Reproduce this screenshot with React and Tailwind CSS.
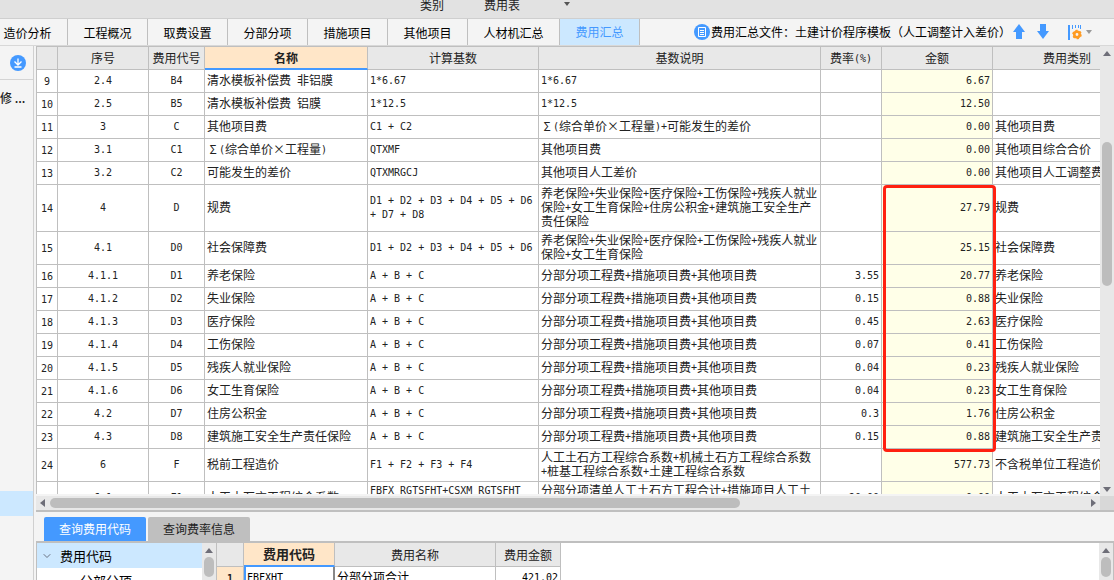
import React, { useState } from 'react';
import { ChevronDown } from 'lucide-react';

const TABS = ['造价分析', '工程概况', '取费设置', '分部分项', '措施项目', '其他项目', '人材机汇总', '费用汇总'];

const ABC = 'A + B + C';
const ABC_DESC = '分部分项工程费+措施项目费+其他项目费';

const ROWS = [
  { no: 9, seq: '2.4', code: 'B4', name: '清水模板补偿费 非铝膜', base: '1*6.67', desc: '1*6.67', rate: '', amount: '6.67', type: '' },
  { no: 10, seq: '2.5', code: 'B5', name: '清水模板补偿费 铝膜', base: '1*12.5', desc: '1*12.5', rate: '', amount: '12.50', type: '' },
  { no: 11, seq: '3', code: 'C', name: '其他项目费', base: 'C1 + C2', desc: 'Σ(综合单价×工程量)+可能发生的差价', rate: '', amount: '0.00', type: '其他项目费' },
  { no: 12, seq: '3.1', code: 'C1', name: 'Σ(综合单价×工程量)', base: 'QTXMF', desc: '其他项目费', rate: '', amount: '0.00', type: '其他项目综合合价' },
  { no: 13, seq: '3.2', code: 'C2', name: '可能发生的差价', base: 'QTXMRGCJ', desc: '其他项目人工差价', rate: '', amount: '0.00', type: '其他项目人工调整费' },
  { no: 14, seq: '4', code: 'D', name: '规费', base: 'D1 + D2 + D3 + D4 + D5 + D6\n+ D7 + D8', desc: '养老保险+失业保险+医疗保险+工伤保险+残疾人就业\n保险+女工生育保险+住房公积金+建筑施工安全生产\n责任保险', rate: '', amount: '27.79', type: '规费' },
  { no: 15, seq: '4.1', code: 'D0', name: '社会保障费', base: 'D1 + D2 + D3 + D4 + D5 + D6', desc: '养老保险+失业保险+医疗保险+工伤保险+残疾人就业\n保险+女工生育保险', rate: '', amount: '25.15', type: '社会保障费' },
  { no: 16, seq: '4.1.1', code: 'D1', name: '养老保险', base: ABC, desc: ABC_DESC, rate: '3.55', amount: '20.77', type: '养老保险' },
  { no: 17, seq: '4.1.2', code: 'D2', name: '失业保险', base: ABC, desc: ABC_DESC, rate: '0.15', amount: '0.88', type: '失业保险' },
  { no: 18, seq: '4.1.3', code: 'D3', name: '医疗保险', base: ABC, desc: ABC_DESC, rate: '0.45', amount: '2.63', type: '医疗保险' },
  { no: 19, seq: '4.1.4', code: 'D4', name: '工伤保险', base: ABC, desc: ABC_DESC, rate: '0.07', amount: '0.41', type: '工伤保险' },
  { no: 20, seq: '4.1.5', code: 'D5', name: '残疾人就业保险', base: ABC, desc: ABC_DESC, rate: '0.04', amount: '0.23', type: '残疾人就业保险' },
  { no: 21, seq: '4.1.6', code: 'D6', name: '女工生育保险', base: ABC, desc: ABC_DESC, rate: '0.04', amount: '0.23', type: '女工生育保险' },
  { no: 22, seq: '4.2', code: 'D7', name: '住房公积金', base: ABC, desc: ABC_DESC, rate: '0.3', amount: '1.76', type: '住房公积金' },
  { no: 23, seq: '4.3', code: 'D8', name: '建筑施工安全生产责任保险', base: ABC, desc: ABC_DESC, rate: '0.15', amount: '0.88', type: '建筑施工安全生产责任保险' },
  { no: 24, seq: '6', code: 'F', name: '税前工程造价', base: 'F1 + F2 + F3 + F4', desc: '人工土石方工程综合系数+机械土石方工程综合系数\n+桩基工程综合系数+土建工程综合系数', rate: '', amount: '577.73', type: '不含税单位工程造价' },
  { no: 25, seq: '6.1', code: 'F1', name: '人工土石方工程综合系数', base: 'FBFX_RGTSFHT+CSXM_RGTSFHT\n+QTXM_RGTSFHT', desc: '分部分项清单人工土石方工程合计+措施项目人工土\n石方工程合计', rate: '20.00', amount: '0.00', type: '人工土石方工程综合系数' },
];

// half-width runs take a 6px advance, symbols take a full 12px cell
const GridText = ({ children }) =>
  String(children).split(/([\x20-\x7e\n]+|[Σ×])/).filter(Boolean).map((part, i) => {
    if (part === 'Σ' || part === '×') {
      return <span key={i} className="inline-block w-3 text-center leading-none">{part}</span>;
    }
    if (/^[\x20-\x7e\n]/.test(part)) {
      return <span key={i} className="align-[1px] font-['DejaVu_Sans_Mono',monospace] text-[10px] leading-[8px]">{part}</span>;
    }
    return part;
  });

const Triangle = ({ dir, className = 'text-[#6e6e78]' }) => {
  const points = { up: '0,5 4,0 8,5', down: '0,0 8,0 4,5', left: '5,0 5,8 0,4', right: '0,0 5,4 0,8' };
  const tall = dir === 'left' || dir === 'right';
  return (
    <svg width={tall ? 5 : 8} height={tall ? 8 : 5} className={`shrink-0 ${className}`} fill="currentColor">
      <polygon points={points[dir]} />
    </svg>
  );
};

const TopBar = () => (
  <div className="flex h-[19px] shrink-0 items-start border-b border-[#cfcfcf] bg-[#e2e2e2] pl-105 leading-[10px] text-[#222]">
    <span className="w-16">类别</span>
    <button className="flex w-38 items-start leading-[10px]">
      <span className="w-20 text-left">费用表</span>
      <svg width="6" height="4" className="mt-[2px]" fill="#555"><polygon points="0,0 6,0 3,4" /></svg>
    </button>
  </div>
);

const FileTools = () => (
  <div className="ml-auto flex shrink-0 items-center pr-[22px] text-black">
    <svg width="16" height="16" viewBox="0 0 16 16">
      <circle cx="8" cy="8" r="8" fill="#4499ff" />
      <path d="M4.5 3.5h7v9h-7z M6 6.5h4 M6 8.5h4 M6 10.5h4" fill="none" stroke="#fff" />
    </svg>
    <span className="w-[303px] whitespace-nowrap pl-px">费用汇总文件：土建计价程序模板（人工调整计入差价）</span>
    <button aria-label="上移" className="mr-3">
      <svg width="12" height="16" fill="#4499ff"><path d="M6 0L12 8H9V15H3V8H0Z" /></svg>
    </button>
    <button aria-label="下移" className="mr-[19px]">
      <svg width="12" height="16" fill="#4499ff"><path d="M6 15L12 7H9V0H3V7H0Z" /></svg>
    </button>
    <button aria-label="设置" className="flex items-center gap-1">
      <svg width="14" height="15" viewBox="0 0 14 15">
        <path d="M0 0h2v15H0z M4 0h1v4H4z M7 0h1v3H7z M10 0h1v3h-1z M12 0h1v4h-1z" fill="#4499ff" />
        <circle cx="9" cy="9.5" r="2.7" fill="none" stroke="#ff9b22" strokeWidth="2.6" />
        <circle cx="9" cy="9.5" r="4" fill="none" stroke="#ff9b22" strokeWidth="1.6" strokeDasharray="2.2 2" />
      </svg>
      <svg width="6" height="4" fill="#999"><polygon points="0,0 6,0 3,4" /></svg>
    </button>
  </div>
);

const TabBar = ({ active, onSelect }) => (
  <div className="flex h-[27px] shrink-0 border-b border-[#d8d8d8] bg-[#f4f4f4]">
    {TABS.map((tab, i) => (
      <button
        key={tab}
        onClick={() => onSelect(tab)}
        className={`shrink-0 border-r border-[#bfbfbf] whitespace-nowrap ${i === 0 ? 'w-17 pr-3' : tab.length === 5 ? 'w-23' : 'w-20'} ${active === tab ? 'bg-[#cce8ff] text-[#4499ff]' : 'pt-px text-black'}`}
      >
        {tab}
      </button>
    ))}
    <FileTools />
  </div>
);

const Sidebar = () => (
  <div className="mr-[2px] flex w-[34px] shrink-0 flex-col border-r border-[#d0d0d0] bg-[#f4f4f4]">
    <div className="flex h-[34px] items-center justify-end border-b border-[#d4d4d4] pr-[7px]">
      <button aria-label="展开">
        <svg width="16" height="16" viewBox="0 0 16 16">
          <circle cx="8" cy="8" r="8" fill="#4499ff" />
          <path d="M8 3.5V10 M4.5 6.5L8 10L11.5 6.5 M4.5 12H11.5" fill="none" stroke="#fff" strokeWidth="1.3" />
        </svg>
      </button>
    </div>
    <div className="pt-2 leading-5 font-medium whitespace-nowrap text-[#222]">修 ...</div>
    <div className="flex-1" />
    <div className="mb-16 h-[25px] bg-[#cce8ff]" />
  </div>
);

const td = 'border-r border-b border-[#bfbfbf] px-[2px] pt-px pb-[3px] whitespace-pre';
const numTd = 'border-r border-b border-[#bfbfbf] p-[2px] text-center';
const th = 'h-[23px] border-r border-b border-[#bfbfbf] bg-[#e8e8e8] p-0 font-normal whitespace-nowrap';

const FeeTable = () => (
  <table className="w-[1105px] table-fixed border-separate border-spacing-0 leading-[14px] text-[#222]">
    <colgroup>
      <col className="w-[21px]" />
      <col className="w-[91px]" />
      <col className="w-[56px]" />
      <col className="w-[163px]" />
      <col className="w-[171px]" />
      <col className="w-[282px]" />
      <col className="w-[61px]" />
      <col className="w-[111px]" />
      <col className="w-[149px]" />
    </colgroup>
    <thead>
      <tr>
        <th className={th}></th>
        <th className={th}>序号</th>
        <th className={th}>费用代号</th>
        <th className="border-r border-b-2 border-r-[#bfbfbf] border-b-[#4499ff] bg-[#ffe6c8] p-0 font-bold">名称</th>
        <th className={th}>计算基数</th>
        <th className={th}>基数说明</th>
        <th className={th}><GridText>费率(%)</GridText></th>
        <th className={th}>金额</th>
        <th className={th}>费用类别</th>
      </tr>
    </thead>
    <tbody>
      {ROWS.map((r) => (
        <tr key={r.no} className="h-[23px]">
          <td className={numTd}><GridText>{r.no}</GridText></td>
          <td className={`${td} text-center`}><GridText>{r.seq}</GridText></td>
          <td className={`${td} text-center`}><GridText>{r.code}</GridText></td>
          <td className={td}><GridText>{r.name}</GridText></td>
          <td className={td}><GridText>{r.base}</GridText></td>
          <td className={td}><GridText>{r.desc}</GridText></td>
          <td className={`${td} text-right`}><GridText>{r.rate}</GridText></td>
          <td className={`${td} bg-[#ffffe8] text-right`}><GridText>{r.amount}</GridText></td>
          <td className={td}><GridText>{r.type}</GridText></td>
        </tr>
      ))}
    </tbody>
  </table>
);

const FeeGrid = () => (
  <div className="flex min-h-0 flex-1 flex-col border-b-2 border-[#bfbfbf]">
    <div className="flex min-h-0 flex-1">
      <div className="relative mb-[2px] min-w-0 flex-1 overflow-hidden border-t border-l border-[#bfbfbf] bg-white">
        <FeeTable />
        {/* highlighted amounts */}
        <div className="pointer-events-none absolute top-[138px] left-[846px] h-[267px] w-[113px] rounded-sm border-3 border-[#ff2010]" />
      </div>
      <div className="flex w-3.5 shrink-0 flex-col items-center bg-[#e8e8e8] pt-[5px] pb-1">
        <Triangle dir="up" />
        <div className="mt-[86px] h-36 w-2.5 rounded-full bg-[#bdbdbd]" />
        <div className="flex-1" />
        <Triangle dir="down" />
      </div>
    </div>
    <div className="flex h-3.5 shrink-0 bg-[#e8e8e8]">
      <div className="flex flex-1 items-center px-1">
        <Triangle dir="left" />
        <div className="ml-[5px] h-2.5 flex-59 rounded-full bg-[#bdbdbd]" />
        <div className="flex-30" />
        <Triangle dir="right" />
      </div>
      <div className="w-3.5 bg-[#d8d8d8]" />
    </div>
  </div>
);

const CodeTable = () => (
  <table className="w-[344px] table-fixed border-separate border-spacing-0 self-start leading-[14px] text-[#222]">
    <colgroup>
      <col className="w-[27px]" />
      <col className="w-[91px]" />
      <col className="w-[161px]" />
      <col className="w-[65px]" />
    </colgroup>
    <thead>
      <tr>
        <th className={th}></th>
        <th className="h-6 border-r border-b-2 border-r-[#bfbfbf] border-b-[#4499ff] bg-[#ffe6c8] p-0 text-[13px] font-bold">费用代码</th>
        <th className={th}>费用名称</th>
        <th className={th}>费用金额</th>
      </tr>
    </thead>
    <tbody>
      <tr className="h-[23px]">
        <td className={`${numTd} bg-[#ffe6c8] font-bold`}><GridText>1</GridText></td>
        <td className="border-r-2 border-b border-l-2 border-r-[#888] border-b-[#bfbfbf] border-l-[#4499ff] px-px pt-px pb-[3px] text-black"><GridText>FBFXHT</GridText></td>
        <td className={`${td} text-black`}>分部分项合计</td>
        <td className={`${td} text-right text-black`}><GridText>421.02</GridText></td>
      </tr>
    </tbody>
  </table>
);

const QueryPanel = () => (
  <div className="flex h-17 shrink-0 flex-col bg-[#f4f4f4]">
    <div className="flex h-[31px] shrink-0 items-end gap-[2px] border-b-2 border-[#bfbfbf] pl-2">
      <button className="h-6 w-[102px] rounded-t-xs bg-[#4499ff] text-white">查询费用代码</button>
      <button className="h-6 w-[102px] rounded-t-xs bg-[#bfbfbf] text-[#222]">查询费率信息</button>
    </div>
    <div className="flex min-h-0 flex-1 overflow-hidden">
      <div className="flex w-[181px] shrink-0 border-r border-l border-[#bfbfbf] bg-white">
        <ul className="flex-1 text-[13px] text-black">
          <li className="flex h-[25px] items-center gap-[7px] bg-[#cce8ff] pl-1">
            <ChevronDown size={12} className="text-gray-500" />
            费用代码
          </li>
          <li className="flex h-[25px] items-center pl-[43px]">分部分项</li>
        </ul>
        <div className="flex w-3.5 flex-col items-center bg-[#e8e8e8] pt-[5px]">
          <Triangle dir="up" />
          <div className="mt-1 h-5 w-2.5 shrink-0 rounded-full bg-[#bdbdbd]" />
        </div>
      </div>
      <div className="flex min-w-0 flex-1 border-r border-[#bfbfbf] bg-white">
        <CodeTable />
        <div className="ml-auto flex w-3.5 flex-col items-center bg-[#e8e8e8] pt-[5px]">
          <Triangle dir="up" />
          <div className="mt-1 h-5 w-2.5 shrink-0 rounded-full bg-[#bdbdbd]" />
        </div>
      </div>
    </div>
  </div>
);

const App = () => {
  const [activeTab, setActiveTab] = useState('费用汇总');

  return (
    <div className="flex h-screen flex-col overflow-hidden bg-[#f4f4f4] font-['Noto_Sans_CJK_SC',sans-serif] text-xs">
      <TopBar />
      <TabBar active={activeTab} onSelect={setActiveTab} />
      <div className="flex min-h-0 flex-1">
        <Sidebar />
        <main className="flex min-w-0 flex-1 flex-col">
          <FeeGrid />
          <QueryPanel />
        </main>
      </div>
    </div>
  );
};

export default App;
